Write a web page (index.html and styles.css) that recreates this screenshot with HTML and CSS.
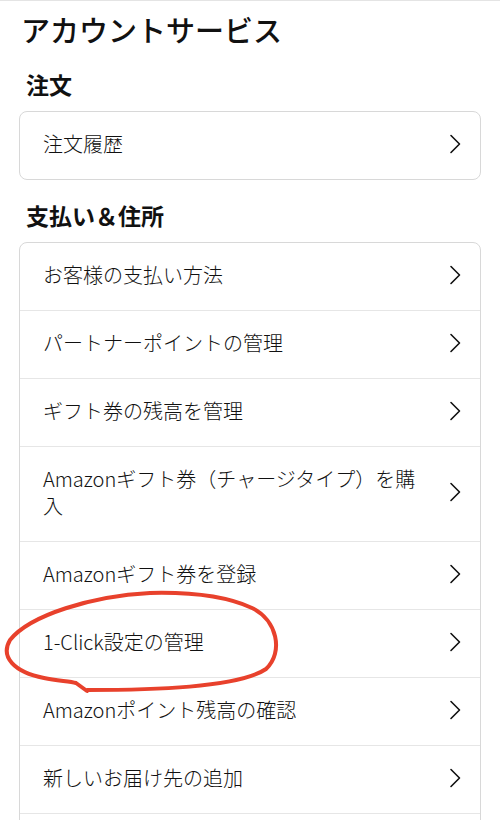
FILE: index.html
```html
<!DOCTYPE html>
<html lang="ja">
<head>
<meta charset="utf-8">
<title>アカウントサービス</title>
<link rel="stylesheet" href="styles.css">
</head>
<body>
<div class="page">
  <h1 class="title">アカウントサービス</h1>

  <h2 class="section-title">注文</h2>
  <ul class="card">
    <li class="row"><span class="label">注文履歴</span><svg class="chev" viewBox="0 0 12 20"><path d="M2 1.5 L10.5 10 L2 18.5"/></svg></li>
  </ul>

  <h2 class="section-title">支払い＆住所</h2>
  <ul class="card">
    <li class="row"><span class="label">お客様の支払い方法</span><svg class="chev" viewBox="0 0 12 20"><path d="M2 1.5 L10.5 10 L2 18.5"/></svg></li>
    <li class="row"><span class="label">パートナーポイントの管理</span><svg class="chev" viewBox="0 0 12 20"><path d="M2 1.5 L10.5 10 L2 18.5"/></svg></li>
    <li class="row"><span class="label">ギフト券の残高を管理</span><svg class="chev" viewBox="0 0 12 20"><path d="M2 1.5 L10.5 10 L2 18.5"/></svg></li>
    <li class="row"><span class="label">Amazonギフト券（チャージタイプ）を購入</span><svg class="chev" viewBox="0 0 12 20"><path d="M2 1.5 L10.5 10 L2 18.5"/></svg></li>
    <li class="row"><span class="label">Amazonギフト券を登録</span><svg class="chev" viewBox="0 0 12 20"><path d="M2 1.5 L10.5 10 L2 18.5"/></svg></li>
    <li class="row"><span class="label">1-Click設定の管理</span><svg class="chev" viewBox="0 0 12 20"><path d="M2 1.5 L10.5 10 L2 18.5"/></svg></li>
    <li class="row"><span class="label">Amazonポイント残高の確認</span><svg class="chev" viewBox="0 0 12 20"><path d="M2 1.5 L10.5 10 L2 18.5"/></svg></li>
    <li class="row"><span class="label">新しいお届け先の追加</span><svg class="chev" viewBox="0 0 12 20"><path d="M2 1.5 L10.5 10 L2 18.5"/></svg></li>
    <li class="row row-empty"></li>
  </ul>

  <svg class="annotation" viewBox="0 0 500 820" width="500" height="820">
    <path d="M87 690 C150 690 238 688 266 669 C284 652 277 620 252 608 C226 596 190 592 150 593 C92 596 30 615 10 640 C0 657 14 672 44 678 C58 681 70 681 76 683 L87 691"/>
  </svg>
</div>
</body>
</html>
```

FILE: styles.css
```css
* {
  box-sizing: border-box;
}

html, body {
  margin: 0;
  padding: 0;
  background: #ffffff;
}

body {
  font-family: "Noto Sans CJK JP", "Noto Sans", sans-serif;
  color: #111111;
  border-top: 1px solid #e4e4e4;
  overflow: hidden;
}

.page {
  position: relative;
  padding: 8px 19px 0 19px;
}

.title {
  margin: 0;
  padding-left: 2px;
  font-size: 29px;
  line-height: 40px;
  font-weight: 500;
  color: #111111;
}

.section-title {
  margin: 19px 0 11px 0;
  padding-left: 7px;
  font-size: 23px;
  line-height: 32px;
  font-weight: 700;
  color: #111111;
}

.card {
  list-style: none;
  margin: 0;
  padding: 0;
  border: 1px solid #d8d8d8;
  border-radius: 8px;
  background: #ffffff;
}

.row {
  display: flex;
  align-items: center;
  padding: 18px 19px 22px 23px;
  border-top: 1px solid #e6e6e6;
}

.row:first-child {
  border-top: none;
}

.row-empty {
  height: 40px;
}

.label {
  flex: 0 0 380px;
  font-size: 20px;
  line-height: 27px;
  font-weight: 300;
  color: #111111;
}

.chev {
  width: 12px;
  height: 20px;
  margin-left: auto;
  flex: 0 0 12px;
}

.chev path {
  fill: none;
  stroke: #111111;
  stroke-width: 1.6;
  stroke-linecap: round;
  stroke-linejoin: round;
}

.annotation {
  position: absolute;
  left: 0;
  top: -1px;
  pointer-events: none;
}

.annotation path {
  fill: none;
  stroke: #e8412c;
  stroke-width: 4;
  stroke-linecap: round;
  stroke-linejoin: round;
}
```
